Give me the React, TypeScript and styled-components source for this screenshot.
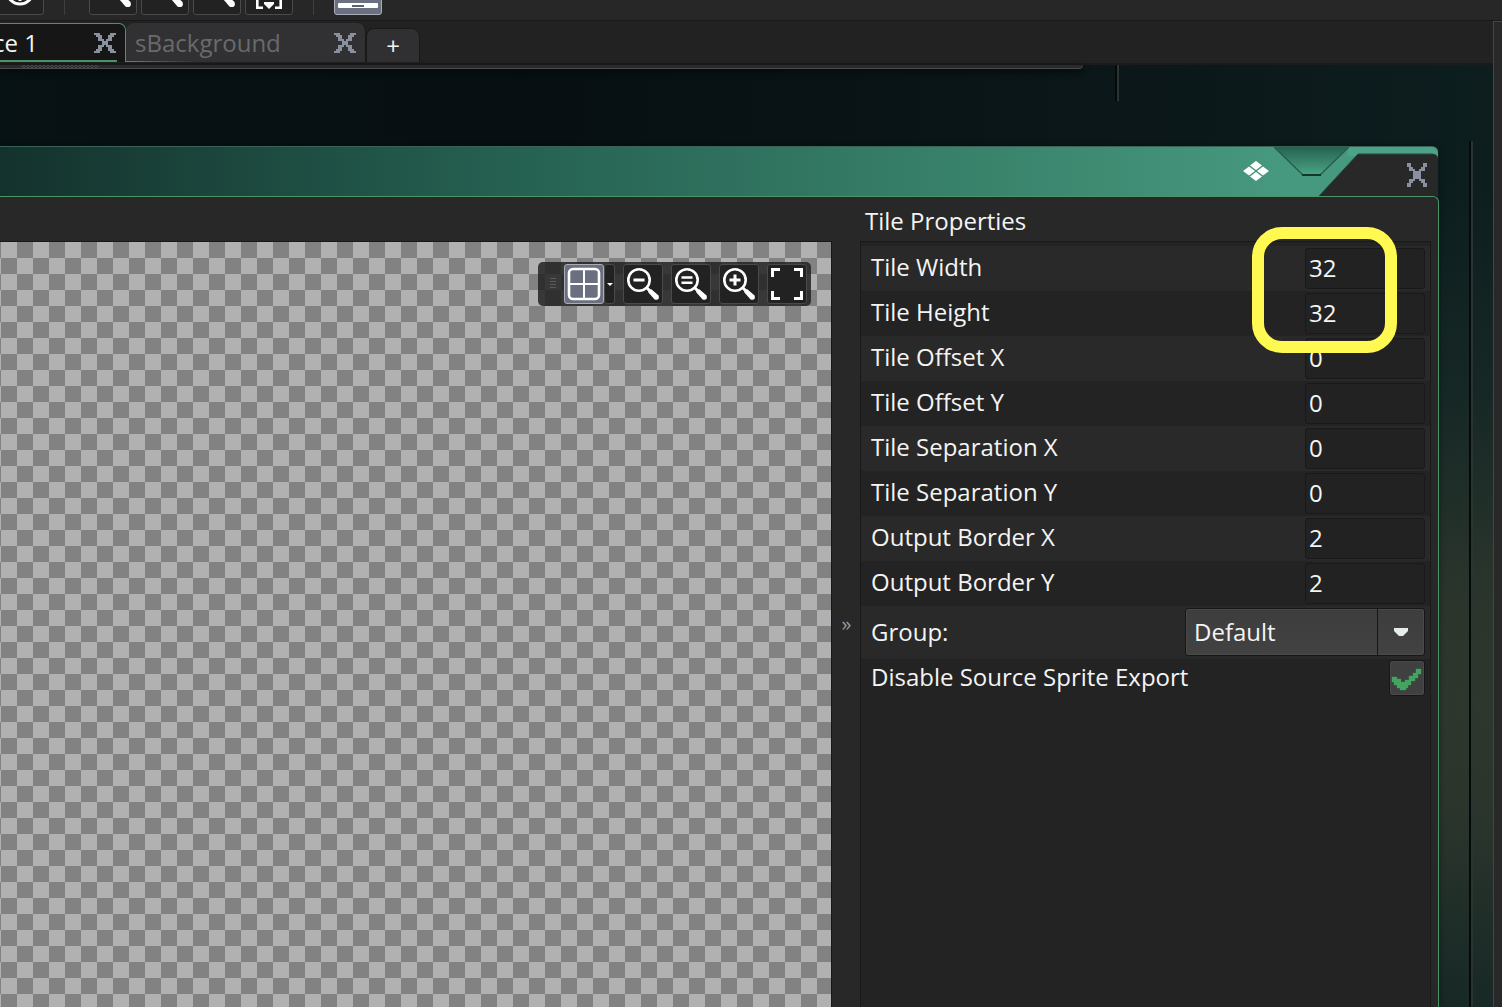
import React, { useState } from "react";
import styled, { createGlobalStyle, css } from "styled-components";

const c = {
  text: "#f4f4f4",
  green: "#4b9468",
  panel: "#282828",
  well: "#232323",
  edge: "#191919",
  steel: "#8a919e",
};

const GlobalStyle = createGlobalStyle`
  *, *::before, *::after { box-sizing: border-box; }
  html, body, #root { height: 100%; }
  body {
    margin: 0;
    overflow: hidden;
    background: ${c.panel};
    color: ${c.text};
    font: 24px/32px "Open Sans", "Noto Sans", sans-serif;
  }
  button, input, select { font: inherit; color: inherit; margin: 0; }
`;

const Shell = styled.div`
  display: flex;
  flex-direction: column;
  height: 100vh;
`;

/* ---- main toolbar ---- */
const Toolbar = styled.header`
  display: flex;
  align-items: flex-end;
  flex: none;
  height: 21px;
  padding-bottom: 5px;
  overflow: hidden;
  background: #272727;
  border-bottom: 1px solid ${c.edge};
`;

const ToolGroup = styled.div`
  display: flex;
  gap: 4px;
`;

const Divider = styled.span<{ $wide?: boolean }>`
  width: 1px;
  height: 48px;
  margin: 0 ${(p) => (p.$wide ? 24 : 20)}px 0 20px;
  background: #3e3e3e;
`;

const ToolButton = styled.button<{ $size?: number; $active?: boolean; $cut?: boolean }>`
  display: flex;
  flex: none;
  align-items: flex-end;
  justify-content: flex-end;
  width: ${(p) => (p.$cut ? 44 : p.$size ?? 48)}px;
  height: ${(p) => p.$size ?? 48}px;
  padding: 0;
  overflow: hidden;
  color: #fff;
  background: ${(p) => (p.$active ? "#6a7080" : "#222222")};
  border: 1px solid ${(p) => (p.$active ? "#a9adb8" : "#4a4a4a")};
  border-radius: 3px;
  ${(p) => p.$cut && css`border-left: 0; border-radius: 0 3px 3px 0;`}
  svg { display: block; flex: none; margin: -1px; }
`;

/* ---- tabs ---- */
const Columns = styled.div`
  display: flex;
  flex: 1;
  min-height: 0;
`;

const Main = styled.main`
  display: flex;
  flex-direction: column;
  flex: 1;
  min-width: 0;
`;

const SideDock = styled.aside`
  width: 9px;
  flex: none;
  background: #292828;
  border-left: 1px solid #454545;
  border-top: 1px solid #454545;
`;

const TabBar = styled.nav`
  display: flex;
  align-items: flex-end;
  flex: none;
  height: 44px;
  padding-bottom: 1px;
  background: #222222;
  border-bottom: 2px solid #1b1b1b;
`;

const Tab = styled.div<{ $active?: boolean }>`
  display: flex;
  align-items: center;
  justify-content: space-between;
  height: 39px;
  background: #313133;
  ${(p) =>
    p.$active
      ? css`
          width: 126px;
          padding-right: 9px;
          background: linear-gradient(${c.green}, ${c.green}) 0 100% / 117px 2px no-repeat #161616;
          border-top: 1px solid ${c.green};
          border-right: 1px solid ${c.green};
          border-radius: 0 7px 0 0;
        `
      : css`
          width: 240px;
          padding: 0 9px;
          background: linear-gradient(90deg, ${c.green}, #313133 70px) 0 100% / 100% 1px no-repeat #313133;
          border-radius: 8px 8px 0 0;
          border-right: 1px solid ${c.edge};
        `}
`;

const TabLabel = styled.a<{ $active?: boolean }>`
  color: ${(p) => (p.$active ? "#f4f4f4" : "#6a6a6c")};
  text-decoration: none;
  white-space: nowrap;
  ${(p) => p.$active && css`display: flex; justify-content: flex-end; width: 38px;`}
`;

const IconButton = styled.button`
  display: flex;
  padding: 0;
  background: none;
  border: 0;
  color: ${c.steel};
`;

const AddTab = styled.button`
  width: 54px;
  height: 34px;
  padding: 0;
  line-height: 32px;
  background: #303032;
  border: 1px solid ${c.edge};
  border-bottom: 0;
  border-radius: 8px 8px 0 0;
`;

/* ---- workspace canvas ---- */
const Workspace = styled.section`
  position: relative;
  display: flex;
  flex-direction: column;
  flex: 1;
  min-height: 0;
  padding: 81px 54px 0 0;
  background:
    radial-gradient(ellipse 900px 520px at 100% 640px, #2d372d 0%, #2b352c 20%, rgba(24, 42, 39, 0.8) 60%, rgba(14, 32, 32, 0) 100%),
    linear-gradient(90deg, #071215 0%, #070f12 35%, #0b1719 75%, #0d1e1f 100%);
`;

const DockedEdge = styled.div`
  position: absolute;
  top: 0;
  left: 0;
  width: 1083px;
  height: 4px;
  background: #2a2a2a;
  border-bottom: 1px solid #4a4a4a;
  border-radius: 0 0 4px 0;
  box-shadow: 0 3px 6px #03090b;
  &::before {
    content: "";
    display: block;
    width: 78px;
    height: 3px;
    margin-left: 21px;
    background: repeating-conic-gradient(#4c4c4c 0 25%, #262626 0 50%) 0 0 / 4px 2px;
  }
`;

const Guide = styled.div<{ $long?: boolean }>`
  position: absolute;
  width: 4px;
  border-left: 2px solid #04090a;
  border-right: 2px solid #2a3533;
  ${(p) => (p.$long ? css`top: 76px; bottom: 0; right: 20px;` : css`top: 0; height: 36px; left: 1115px;`)}
`;

const Window = styled.article`
  display: flex;
  flex-direction: column;
  flex: 1;
  min-height: 0;
  box-shadow: 0 0 6px rgba(0, 0, 0, 0.4);
`;

const TitleBar = styled.div`
  display: flex;
  align-items: center;
  justify-content: flex-end;
  flex: none;
  height: 50px;
  margin-right: 1px;
  background: linear-gradient(90deg, #14322d, #256051 500px, #3a846c 1000px, #46987e 1280px);
  border-top: 1px solid #3a6256;
  border-radius: 0 6px 0 0;
  overflow: hidden;
`;

const TitleShape = styled.div`
  position: relative;
  width: 168px;
  height: 49px;
  > svg { display: block; }
`;

const CloseSpot = styled.div`
  position: absolute;
  top: 16px;
  right: 11px;
`;

const WindowBody = styled.div`
  display: flex;
  flex: 1;
  min-height: 0;
  padding-right: 7px;
  background: ${c.panel};
  border-top: 1px solid ${c.green};
  border-right: 1px solid ${c.green};
  border-radius: 0 6px 0 0;
`;

const Preview = styled.div`
  position: relative;
  flex: 1;
  min-width: 0;
  margin-top: 44px;
  background: repeating-conic-gradient(#828282 0 25%, #b1b1b1 0 50%) 1px 0 / 32px 32px;
  border-top: 1px solid #171717;
  border-right: 1px solid #171717;
`;

const FloatingTools = styled.div`
  position: absolute;
  top: 20px;
  right: 20px;
  display: flex;
  align-items: center;
  gap: 8px;
  height: 44px;
  padding: 0 4px 0 12px;
  background: rgba(32, 32, 32, 0.84);
  border-radius: 5px;
`;

const Grip = styled.span`
  width: 6px;
  height: 12px;
  background: repeating-linear-gradient(#5c5c5c 0 1px, transparent 1px 3px);
`;

const SplitButton = styled.div`
  display: flex;
`;

const ArrowButton = styled.button`
  display: flex;
  align-items: center;
  justify-content: center;
  width: 11px;
  height: 40px;
  padding: 0;
  background: #222222;
  border: 1px solid #4a4a4a;
  border-radius: 3px;
`;

const Splitter = styled.button`
  width: 28px;
  flex: none;
  padding: 0 0 0 1px;
  margin-top: 44px;
  color: #9a9a9a;
  background: none;
  border: 0;
  font-size: 20px;
`;

const Properties = styled.form`
  position: relative;
  display: flex;
  flex-direction: column;
  width: 571px;
  flex: none;
`;

const Heading = styled.h2`
  margin: 0;
  height: 44px;
  padding: 8px 5px 4px;
  font: inherit;
`;

const List = styled.div`
  flex: 1;
  padding-top: 4px;
  background: ${c.well};
  border: 1px solid ${c.edge};
  border-bottom: 0;
`;

const Label = styled.label`
  flex: 1;
  padding-bottom: 4px;
`;

const Row = styled.div<{ $kind?: "group" | "toggle" }>`
  display: flex;
  align-items: center;
  justify-content: space-between;
  height: 45px;
  padding: 0 5px 0 10px;
  &:nth-child(odd) { background: #292929; }
  ${(p) =>
    p.$kind === "group" &&
    css`
      height: 53px;
      padding-bottom: 1px;
      ${Label} { padding-bottom: 0; }
    `}
  ${(p) =>
    p.$kind === "toggle" &&
    css`
      height: 38px;
      ${Label} { padding-bottom: 2px; }
    `}
`;

const NumberBox = styled.input`
  width: 120px;
  height: 41px;
  padding: 0 3px 2px;
  background: #222222;
  border: 1px solid ${c.edge};
  border-radius: 3px;
  outline: 0;
`;

const SelectFrame = styled.div`
  display: grid;
  grid-template-columns: 1fr 47px;
  width: 240px;
  height: 48px;
  background: linear-gradient(#3d3d3d, #424242);
  border: 1px solid #161616;
  border-radius: 3px;
  box-shadow: inset 0 0 0 1px #4a4a4a;
`;

const Select = styled.select`
  grid-area: 1 / 1 / 2 / 3;
  padding: 0 8px;
  appearance: none;
  background: none;
  border: 0;
  outline: 0;
`;

const SelectArrow = styled.span`
  grid-area: 1 / 2 / 2 / 3;
  display: flex;
  align-items: center;
  justify-content: center;
  border-left: 1px solid #161616;
  pointer-events: none;
`;

const CheckFrame = styled.div`
  display: grid;
  width: 36px;
  height: 36px;
  > * { grid-area: 1 / 1 / 2 / 2; }
  svg { pointer-events: none; }
`;

const CheckBox = styled.input`
  appearance: none;
  width: 36px;
  height: 36px;
  background: #404040;
  border: 1px solid #161616;
  border-radius: 3px;
  box-shadow: inset 0 0 0 1px #4a4a4a;
`;

const Highlight = styled.div`
  position: absolute;
  top: 30px;
  right: 34px;
  width: 145px;
  height: 126px;
  border: 12px solid #fff951;
  border-radius: 30px;
  pointer-events: none;
`;

/* ---- drawings ---- */
const TAB_X = [
  "XXX.....XXX",
  ".XXX...XXX.",
  "..XX...XX..",
  "..XXX.XXX..",
  "....XXX....",
  "....XXX....",
  "..XXX.XXX..",
  "..XX...XX..",
  ".XXX...XXX.",
  "XXX.....XXX",
];
const WINDOW_X = [
  "XX......XX",
  "XX......XX",
  ".XX....XX.",
  ".XXX..XXX.",
  "...XXXX...",
  "...XXXX...",
  "...XXXX...",
  "...XXXX...",
  ".XXX..XXX.",
  ".XX....XX.",
  "XX......XX",
  "XX......XX",
];

function PixelIcon({ rows }: { rows: string[] }) {
  const w = rows[0].length;
  return (
    <svg width={w * 2} height={rows.length * 2} viewBox={`0 0 ${w} ${rows.length}`} fill="currentColor" shapeRendering="crispEdges" aria-hidden="true">
      {rows.flatMap((r, y) => [...r].map((ch, x) => (ch === "X" ? <rect key={`${x}-${y}`} x={x} y={y} width="1" height="1" /> : null)))}
    </svg>
  );
}

function Magnifier({ sign, size }: { sign?: "minus" | "equal" | "plus"; size: number }) {
  return (
    <svg width={size} height={size} viewBox={sign ? "0 0 40 40" : "1 2.5 40 40"} fill="none" stroke="currentColor" aria-hidden="true">
      <circle cx="16" cy="16" r="10.7" strokeWidth="2.6" />
      <path d="M23.5 23.5L28 28" strokeWidth="3" />
      <path d="M28 25L35.6 31.6Q37 36.8 31.6 35.6L25 28Z" fill="currentColor" stroke="none" />
      {sign === "minus" && <path d="M10.5 16h11" strokeWidth="3" />}
      {sign === "equal" && <path d="M10.5 13.5h11M10.5 18.7h11" strokeWidth="2.4" />}
      {sign === "plus" && <path d="M10.5 16h11M16 10.5v11" strokeWidth="3" />}
    </svg>
  );
}

const GridIcon = () => (
  <svg width="40" height="40" viewBox="0 0 40 40" fill="none" stroke="#fff" aria-hidden="true">
    <rect x="5" y="5" width="30" height="30" rx="4" strokeWidth="2.6" />
    <path d="M20 5v30M5 20h30" strokeWidth="2" />
  </svg>
);

const FitIcon = () => (
  <svg width="40" height="40" viewBox="0 0 40 40" fill="none" stroke="#fff" strokeWidth="3" aria-hidden="true">
    <path d="M5.5 13V5.5H13M27 5.5h7.5V13M34.5 27v7.5H27M13 34.5H5.5V27" />
  </svg>
);

const RunIcon = () => (
  <svg width="48" height="48" viewBox="0 0 48 48" fill="none" stroke="#fff" strokeWidth="3" aria-hidden="true">
    <circle cx="24" cy="24" r="13" />
    <path d="M24 22v12" />
  </svg>
);

const ExportIcon = () => (
  <svg width="48" height="48" viewBox="0 1 48 48" fill="none" stroke="#fff" strokeWidth="2.6" aria-hidden="true">
    <path d="M18 41.7h-5.7V28M30 41.7h5.7V28" />
    <path d="M19 36h10v2l-5 5-5-5z" fill="#fff" stroke="none" />
  </svg>
);

const DrawerIcon = () => (
  <svg width="48" height="48" viewBox="0 0 48 48" aria-hidden="true">
    <rect x="4" y="36" width="40" height="5" rx="1" fill="#fff" />
    <rect x="18" y="38" width="12" height="2" fill="#5c6270" />
  </svg>
);

const TitleDecor = () => (
  <svg width="168" height="49" viewBox="0 0 168 49" aria-hidden="true">
    <defs>
      <linearGradient id="notch" x1="0" y1="0" x2="0" y2="1">
        <stop offset="0" stopColor="#266150" />
        <stop offset="1" stopColor="#4aa586" />
      </linearGradient>
    </defs>
    <path d="M78 0H163Q168 1 168 9H78Z" fill="#4ba285" />
    <path d="M4 0L33 28H50L79 0Z" fill="url(#notch)" />
    <path d="M4 0L33 28M50 28L79 0" fill="none" stroke="#27604f" strokeWidth="1.6" />
    <path d="M32 28H51" stroke="#17352d" strokeWidth="2" />
    <path d="M49 49L88 7H163Q167 7 168 11V49Z" fill="#282828" />
    <path d="M49 49L88 7H163" fill="none" stroke="#23493e" />
  </svg>
);

const TilesetIcon = () => (
  <svg width="28" height="22" viewBox="0 1 28 22" fill="#fff" aria-hidden="true">
    <path d="M14 1l6 4.5-6 4.5-6-4.5zM14 12l6 4.5-6 4.5-6-4.5zM7 6.5l6 4.5-6 4.5L1 11zM21 6.5l6 4.5-6 4.5-6-4.5z" />
  </svg>
);

const CheckIcon = () => (
  <svg width="36" height="36" viewBox="0 0 36 36" fill="#44a35e" stroke="#2f6a4e" strokeWidth="1" paintOrder="stroke" aria-hidden="true">
    <path d="M3 17H8V19H12V22H16V20H20V16H24V13H27V9H32V14H29V18H26V21H22V25H19V28H17V30H11V28H8V25H5V22H3Z" />
  </svg>
);

const fields = [
  ["Tile Width", "32"],
  ["Tile Height", "32"],
  ["Tile Offset X", "0"],
  ["Tile Offset Y", "0"],
  ["Tile Separation X", "0"],
  ["Tile Separation Y", "0"],
  ["Output Border X", "2"],
  ["Output Border Y", "2"],
];

export default function App() {
  const [values, setValues] = useState(fields.map((f) => f[1]));
  const [disabled, setDisabled] = useState(true);

  return (
    <Shell>
      <GlobalStyle />
      <Toolbar>
        <ToolButton $cut aria-label="Run"><RunIcon /></ToolButton>
        <Divider $wide />
        <ToolGroup>
          <ToolButton aria-label="Zoom out"><Magnifier size={48} /></ToolButton>
          <ToolButton aria-label="Zoom reset"><Magnifier size={48} /></ToolButton>
          <ToolButton aria-label="Zoom in"><Magnifier size={48} /></ToolButton>
          <ToolButton aria-label="Dock"><ExportIcon /></ToolButton>
        </ToolGroup>
        <Divider />
        <ToolButton $active aria-label="Layout"><DrawerIcon /></ToolButton>
      </Toolbar>
      <Columns>
        <Main>
          <TabBar>
            <Tab $active>
              <TabLabel $active href="#workspace">ce 1</TabLabel>
              <IconButton aria-label="Close workspace"><PixelIcon rows={TAB_X} /></IconButton>
            </Tab>
            <Tab>
              <TabLabel href="#background">sBackground</TabLabel>
              <IconButton aria-label="Close sBackground"><PixelIcon rows={TAB_X} /></IconButton>
            </Tab>
            <AddTab>+</AddTab>
          </TabBar>
          <Workspace>
            <DockedEdge />
            <Guide />
            <Guide $long />
            <Window>
              <TitleBar>
                <TilesetIcon />
                <TitleShape>
                  <TitleDecor />
                  <CloseSpot>
                    <IconButton aria-label="Close window"><PixelIcon rows={WINDOW_X} /></IconButton>
                  </CloseSpot>
                </TitleShape>
              </TitleBar>
              <WindowBody>
                <Preview>
                  <FloatingTools>
                    <Grip />
                    <SplitButton>
                      <ToolButton $size={40} $active aria-label="Toggle grid"><GridIcon /></ToolButton>
                      <ArrowButton aria-label="Grid options">
                        <svg width="6" height="3" viewBox="0 0 6 3" aria-hidden="true"><path d="M0 0h6L3 3z" fill="#fff" /></svg>
                      </ArrowButton>
                    </SplitButton>
                    <ToolButton $size={40} aria-label="Zoom out"><Magnifier sign="minus" size={40} /></ToolButton>
                    <ToolButton $size={40} aria-label="Actual size"><Magnifier sign="equal" size={40} /></ToolButton>
                    <ToolButton $size={40} aria-label="Zoom in"><Magnifier sign="plus" size={40} /></ToolButton>
                    <ToolButton $size={40} aria-label="Fit to view"><FitIcon /></ToolButton>
                  </FloatingTools>
                </Preview>
                <Splitter type="button" aria-label="Collapse panel">»</Splitter>
                <Properties>
                  <Heading>Tile Properties</Heading>
                  <List>
                    {fields.map(([name], i) => (
                      <Row key={name}>
                        <Label htmlFor={`f${i}`}>{name}</Label>
                        <NumberBox
                          id={`f${i}`}
                          value={values[i]}
                          onChange={(e) => setValues(values.map((v, j) => (j === i ? e.target.value : v)))}
                        />
                      </Row>
                    ))}
                    <Row $kind="group">
                      <Label htmlFor="group">Group:</Label>
                      <SelectFrame>
                        <Select id="group"><option>Default</option></Select>
                        <SelectArrow>
                          <svg width="14" height="8" viewBox="0 0 14 8" aria-hidden="true"><path d="M0 0h14v3l-5 5H5L0 3z" fill="#e6ecea" /></svg>
                        </SelectArrow>
                      </SelectFrame>
                    </Row>
                    <Row $kind="toggle">
                      <Label htmlFor="disable">Disable Source Sprite Export</Label>
                      <CheckFrame>
                        <CheckBox id="disable" type="checkbox" checked={disabled} onChange={() => setDisabled(!disabled)} />
                        {disabled && <CheckIcon />}
                      </CheckFrame>
                    </Row>
                  </List>
                  <Highlight />
                </Properties>
              </WindowBody>
            </Window>
          </Workspace>
        </Main>
        <SideDock />
      </Columns>
    </Shell>
  );
}
